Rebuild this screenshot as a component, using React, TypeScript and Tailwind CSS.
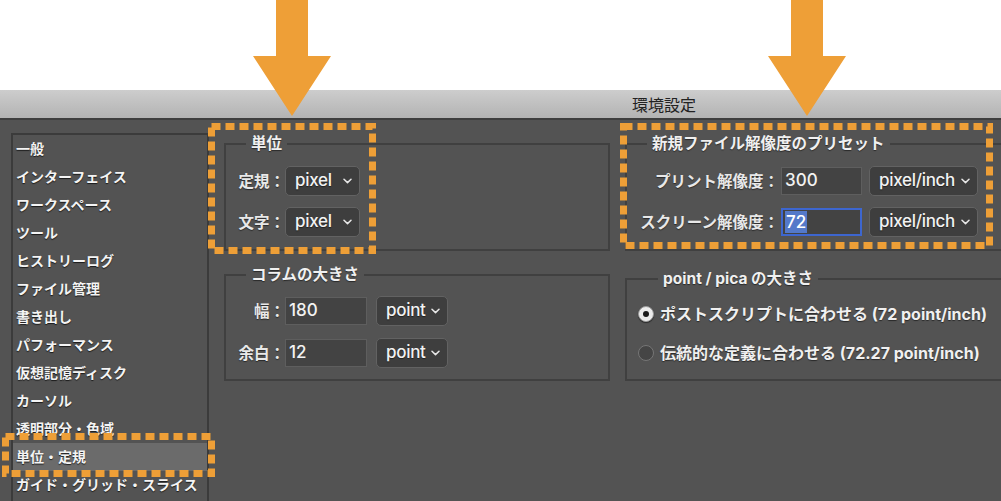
import React from "react";

const jp = "font-['Noto_Sans_CJK_JP',sans-serif]";
const mixed = "font-['Inter','Noto_Sans_CJK_JP',sans-serif]";

const sideItems = [
    "一般",
    "インターフェイス",
    "ワークスペース",
    "ツール",
    "ヒストリーログ",
    "ファイル管理",
    "書き出し",
    "パフォーマンス",
    "仮想記憶ディスク",
    "カーソル",
    "透明部分・色域",
    "単位・定規",
    "ガイド・グリッド・スライス",
];

function Chevron() {
    return (
        <svg width="9" height="6" viewBox="0 0 9 6" className="shrink-0">
            <path d="M1 1.2 4.5 4.6 8 1.2" fill="none" stroke="#e8e8e8" strokeWidth="1.5" strokeLinecap="round" strokeLinejoin="round" />
        </svg>
    );
}

function Select({ value, className }: { value: string; className: string }) {
    return (
        <div
            className={`flex items-center justify-between h-[30px] rounded-[5px] bg-[#3e3e3e] border border-[#626262] pl-[9px] pr-[7px] text-[17px] tracking-[-0.3px] font-medium text-[#f2f2f2] [text-shadow:0_1px_1px_rgba(0,0,0,0.5)] ${mixed} ${className}`}
        >
            <span>{value}</span>
            <Chevron />
        </div>
    );
}

function Field({ value, className, focused }: { value: string; className: string; focused?: boolean }) {
    return (
        <div
            className={`flex items-center h-[28px] bg-[#434343] pl-[2px] text-[17px] font-medium text-[#f2f2f2] ${mixed} ${
                focused ? "border-2 border-[#3d66cf]" : "border border-[#5e5e5e]"
            } ${className}`}
        >
            {focused ? <span className="bg-[#5479c9] text-white leading-[22px] px-[1px]">{value}</span> : <span className="pl-[1px]">{value}</span>}
        </div>
    );
}

function Legend({ children }: { children: React.ReactNode }) {
    return (
        <legend className={`ml-[20px] px-[5px] h-[20px] leading-[20px] text-[15.5px] font-bold text-[#f0f0f0] [text-shadow:0_1px_1px_rgba(0,0,0,0.5)] ${mixed}`}>
            {children}
        </legend>
    );
}

function Label({ children, className }: { children: React.ReactNode; className: string }) {
    return (
        <span className={`text-right text-[15.5px] font-bold text-[#e8e8e8] [text-shadow:0_1px_1px_rgba(0,0,0,0.5)] ${jp} ${className}`}>
            {children}
        </span>
    );
}

function Radio({ checked }: { checked?: boolean }) {
    if (checked) {
        return (
            <span className="flex items-center justify-center w-[16px] h-[16px] rounded-full bg-[#ededed] border border-[#9a9a9a] shadow-[0_1px_1px_rgba(0,0,0,0.5)]">
                <span className="w-[6px] h-[6px] rounded-full bg-[#1c1c1c]" />
            </span>
        );
    }
    return <span className="w-[16px] h-[16px] rounded-full bg-[#454545] border border-[#767676]" />;
}

function DotBox({ className, w, h }: { className: string; w: number; h: number }) {
    return (
        <svg className={`absolute pointer-events-none ${className}`} width={w} height={h}>
            <rect x="3.5" y="3.5" width={w - 7} height={h - 7} fill="none" stroke="#EE9F37" strokeWidth="7" strokeDasharray="9 5" />
        </svg>
    );
}

function Arrow({ className }: { className: string }) {
    return (
        <svg className={`absolute top-0 ${className}`} width="78" height="117" viewBox="0 0 78 117">
            <polygon points="23,0 55,0 55,56 78,56 39,116 0,56 23,56" fill="#EE9F37" />
        </svg>
    );
}

export default function App() {
    return (
        <div className="relative w-[1001px] h-[501px] overflow-hidden bg-white">
            <div className="h-[90px]" />
            <div className="h-[28px] bg-gradient-to-b from-[#cdcdcd] to-[#b3b3b3] border-b-2 border-[#3e3e3e] box-content flex items-center">
                <span className={`pl-[632px] text-[16px] text-[#222] ${jp}`}>環境設定</span>
            </div>

            <div className="flex h-[381px] bg-[#535353]">
                <div className="pl-[11px] pt-[13px]">
                    <div className="w-[198px] h-[400px] border-2 border-[#3b3b3b]">
                        {sideItems.map((item, i) => (
                            <div
                                key={item}
                                className={`h-[28px] flex items-center pl-[3px] pb-[2px] whitespace-nowrap text-[14px] font-bold text-[#f4f4f4] [text-shadow:0_1px_1px_rgba(0,0,0,0.7)] ${jp} ${
                                    i === 11 ? "bg-[#6b6b6b]" : ""
                                }`}
                            >
                                {item}
                            </div>
                        ))}
                    </div>
                </div>

                <div className="w-[401px] pl-[15px] pt-[14px] flex flex-col gap-[14px]">
                    <fieldset className="border-2 border-[#404040] pt-[12px] pb-[12px] flex flex-col gap-[11px]">
                        <Legend>単位</Legend>
                        <div className="flex items-center h-[30px]">
                            <Label className="w-[59px]">定規：</Label>
                            <Select value="pixel" className="w-[75px]" />
                        </div>
                        <div className="flex items-center h-[30px]">
                            <Label className="w-[59px]">文字：</Label>
                            <Select value="pixel" className="w-[75px]" />
                        </div>
                    </fieldset>

                    <fieldset className="border-2 border-[#404040] pt-[11px] pb-[11px] flex flex-col gap-[12px]">
                        <Legend>コラムの大きさ</Legend>
                        <div className="flex items-center h-[30px]">
                            <Label className="w-[59px]">幅：</Label>
                            <Field value="180" className="w-[82px] h-[27px]" />
                            <Select value="point" className="w-[72px] ml-[9px]" />
                        </div>
                        <div className="flex items-center h-[30px]">
                            <Label className="w-[59px]">余白：</Label>
                            <Field value="12" className="w-[82px] h-[27px]" />
                            <Select value="point" className="w-[72px] ml-[9px]" />
                        </div>
                    </fieldset>
                </div>

                <div className="flex-1 pl-[15px] pt-[14px] flex flex-col gap-[18px]">
                    <fieldset className="border-2 border-r-0 border-[#404040] pt-[12px] pb-[12px] flex flex-col gap-[11px]">
                        <Legend>新規ファイル解像度のプリセット</Legend>
                        <div className="flex items-center h-[30px]">
                            <Label className="w-[152px]">プリント解像度：</Label>
                            <Field value="300" className="w-[81px] ml-[2px]" />
                            <Select value="pixel/inch" className="w-[109px] ml-[7px]" />
                        </div>
                        <div className="flex items-center h-[30px]">
                            <Label className="w-[152px]">スクリーン解像度：</Label>
                            <Field value="72" focused className="w-[81px] ml-[2px]" />
                            <Select value="pixel/inch" className="w-[109px] ml-[7px]" />
                        </div>
                    </fieldset>

                    <fieldset className="border-2 border-r-0 border-[#404040] pt-[13px] pb-[14px] pl-[11px] flex flex-col gap-[15px]">
                        <Legend>point / pica の大きさ</Legend>
                        <div className="flex items-center h-[24px] gap-[6px]">
                            <Radio checked />
                            <span className={`text-[16px] font-bold text-[#f0f0f0] whitespace-nowrap [text-shadow:0_1px_1px_rgba(0,0,0,0.5)] ${mixed}`}>
                                ポストスクリプトに合わせる (72 point/inch)
                            </span>
                        </div>
                        <div className="flex items-center h-[24px] gap-[6px]">
                            <Radio />
                            <span className={`text-[16px] font-bold text-[#f0f0f0] whitespace-nowrap [text-shadow:0_1px_1px_rgba(0,0,0,0.5)] ${mixed}`}>
                                伝統的な定義に合わせる (72.27 point/inch)
                            </span>
                        </div>
                    </fieldset>
                </div>
            </div>

            <Arrow className="left-[253px]" />
            <Arrow className="left-[768px]" />
            <DotBox className="left-[208px] top-[123px]" w={168} h={131} />
            <DotBox className="left-[620px] top-[123px]" w={373} h={126} />
            <DotBox className="left-[2px] top-[433px]" w={213} h={44} />
        </div>
    );
}
